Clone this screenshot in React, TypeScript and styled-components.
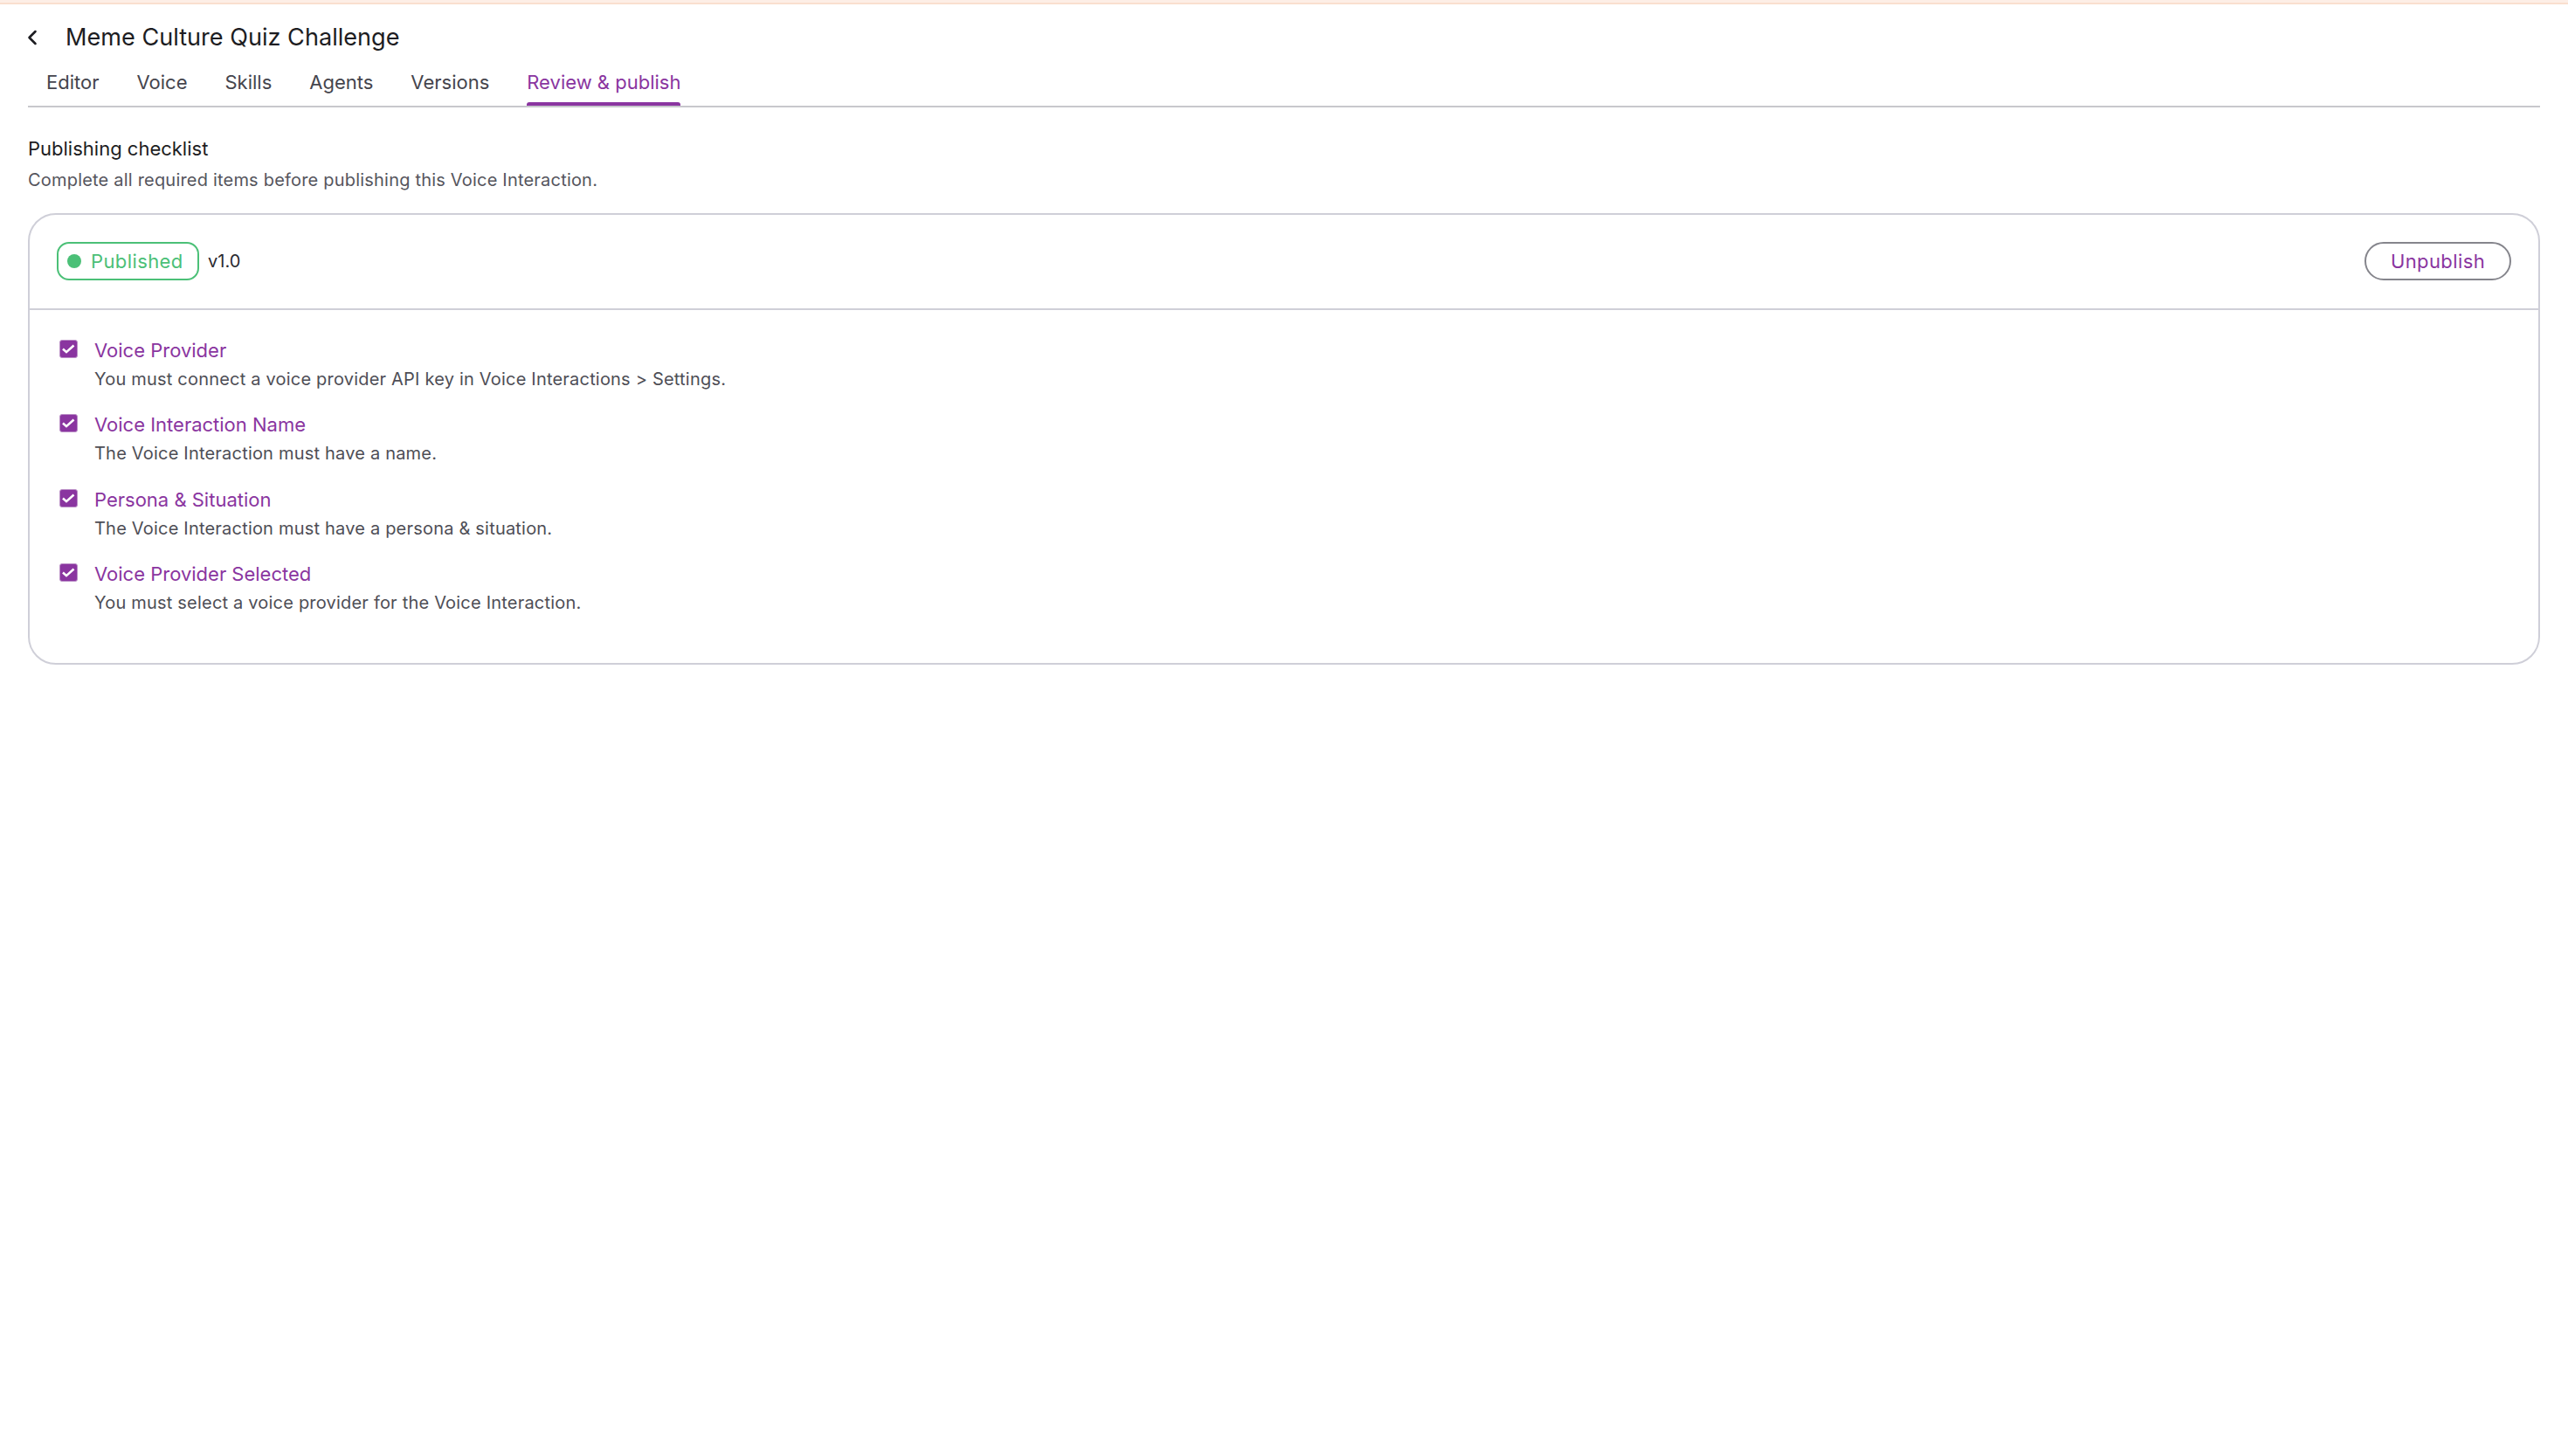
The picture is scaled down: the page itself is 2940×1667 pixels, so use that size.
import React from "react"
import styled, { createGlobalStyle } from "styled-components"
import { ChevronLeft } from "lucide-react"

const purple = "#8a35a0"

const GlobalStyle = createGlobalStyle`
  html, body {
    margin: 0;
    padding: 0;
    background: #ffffff;
    font-family: Inter, "Liberation Sans", sans-serif;
    -webkit-font-smoothing: antialiased;
  }
`

const Page = styled.div`
  min-height: 1667px;
  box-sizing: border-box;
`

const TopStrip = styled.div`
  box-sizing: border-box;
  height: 5px;
  background: #fadfcf;
  border-top: 3px solid #fdeee6;
`

const Content = styled.div`
  padding: 0 32px;
`

const TitleRow = styled.div`
  display: flex;
  align-items: center;
  height: 75px;
`

const BackButton = styled.div`
  display: flex;
  width: 43px;
  color: #1d1d22;

  svg {
    flex: none;
    margin-left: -9px;
  }
`

const Title = styled.h1`
  margin: 0;
  font-size: 27.1px;
  line-height: 36px;
  font-weight: 400;
  color: #1d1d22;
`

const Tabs = styled.div`
  display: flex;
  gap: 43px;
  padding: 0 21px;
  height: 41px;
  border-bottom: 2px solid #c8c8cc;
`

const Tab = styled.div<{ $active?: boolean }>`
  position: relative;
  font-size: 22px;
  line-height: 28px;
  color: ${(p) => (p.$active ? purple : "#45454d")};

  ${(p) =>
    p.$active &&
    `&::after {
      content: "";
      position: absolute;
      left: 0;
      right: 0;
      bottom: 0;
      height: 4px;
      border-radius: 3px 3px 0 0;
      background: ${purple};
    }`}
`

const Heading = styled.h2`
  margin: 30px 0 0;
  font-size: 22px;
  line-height: 34px;
  font-weight: 400;
  color: #1d1d22;
`

const Intro = styled.p`
  margin: 4px 0 0;
  font-size: 20px;
  line-height: 30px;
  color: #55555d;
  letter-spacing: 0.2px;
`

const Card = styled.section`
  margin-top: 23px;
  border: 2px solid #cfcfd8;
  border-radius: 32px;
  height: 517px;
  box-sizing: border-box;
`

const CardHeader = styled.div`
  display: flex;
  align-items: center;
  box-sizing: border-box;
  height: 109px;
  padding: 0 31px 2px;
  border-bottom: 2px solid #cfcfd8;
`

const Badge = styled.div`
  display: flex;
  align-items: center;
  gap: 11px;
  box-sizing: border-box;
  width: 163px;
  height: 44px;
  padding-left: 10px;
  border: 2px solid #4bc077;
  border-radius: 14px;
  color: #4bc077;
  font-size: 22px;
  letter-spacing: 0.4px;
`

const Dot = styled.span`
  width: 16px;
  height: 16px;
  border-radius: 50%;
  background: #4bc077;
`

const Version = styled.span`
  margin-left: 10px;
  font-size: 20px;
  color: #2a2a30;
`

const UnpublishButton = styled.button`
  margin-left: auto;
  width: 168px;
  height: 44px;
  border: 2px solid #85858c;
  border-radius: 22px;
  background: #ffffff;
  color: ${purple};
  font-family: inherit;
  font-size: 22px;
  letter-spacing: 0.4px;
`

const List = styled.div`
  display: flex;
  flex-direction: column;
  gap: 19.4px;
  padding: 30px 32px 0 34px;
`

const Item = styled.div`
  display: flex;
  gap: 19px;
`

const Checkbox = styled.span`
  display: flex;
  align-items: center;
  justify-content: center;
  flex: none;
  box-sizing: border-box;
  width: 21px;
  height: 21px;
  margin-top: 4px;
  border: 1px solid #bb8fc7;
  border-radius: 3px;
  background: ${purple};
`

const ItemTitle = styled.div`
  font-size: 22px;
  line-height: 32px;
  color: ${purple};
`

const ItemText = styled.div`
  font-size: 20px;
  line-height: 34px;
  color: #4e4e56;
  letter-spacing: 0.2px;
`

const items = [
  ["Voice Provider", "You must connect a voice provider API key in Voice Interactions > Settings."],
  ["Voice Interaction Name", "The Voice Interaction must have a name."],
  ["Persona & Situation", "The Voice Interaction must have a persona & situation."],
  ["Voice Provider Selected", "You must select a voice provider for the Voice Interaction."],
]

const tabs = ["Editor", "Voice", "Skills", "Agents", "Versions", "Review & publish"]

export default function App() {
  return (
    <Page>
      <GlobalStyle />
      <TopStrip />
      <Content>
        <TitleRow>
          <BackButton>
            <ChevronLeft size={28} strokeWidth={2.2} />
          </BackButton>
          <Title>Meme Culture Quiz Challenge</Title>
        </TitleRow>
        <Tabs>
          {tabs.map((t) => (
            <Tab key={t} $active={t === "Review & publish"}>
              {t}
            </Tab>
          ))}
        </Tabs>
        <Heading>Publishing checklist</Heading>
        <Intro>Complete all required items before publishing this Voice Interaction.</Intro>
        <Card>
          <CardHeader>
            <Badge>
              <Dot />
              Published
            </Badge>
            <Version>v1.0</Version>
            <UnpublishButton>Unpublish</UnpublishButton>
          </CardHeader>
          <List>
            {items.map(([title, text]) => (
              <Item key={title}>
                <Checkbox>
                  <svg width="19" height="19" viewBox="0 0 19 19" fill="none">
                    <path d="M3 9.5l4 3.6L15.5 5.5" stroke="#fff" strokeWidth="2.6" />
                  </svg>
                </Checkbox>
                <div>
                  <ItemTitle>{title}</ItemTitle>
                  <ItemText>{text}</ItemText>
                </div>
              </Item>
            ))}
          </List>
        </Card>
      </Content>
    </Page>
  )
}
